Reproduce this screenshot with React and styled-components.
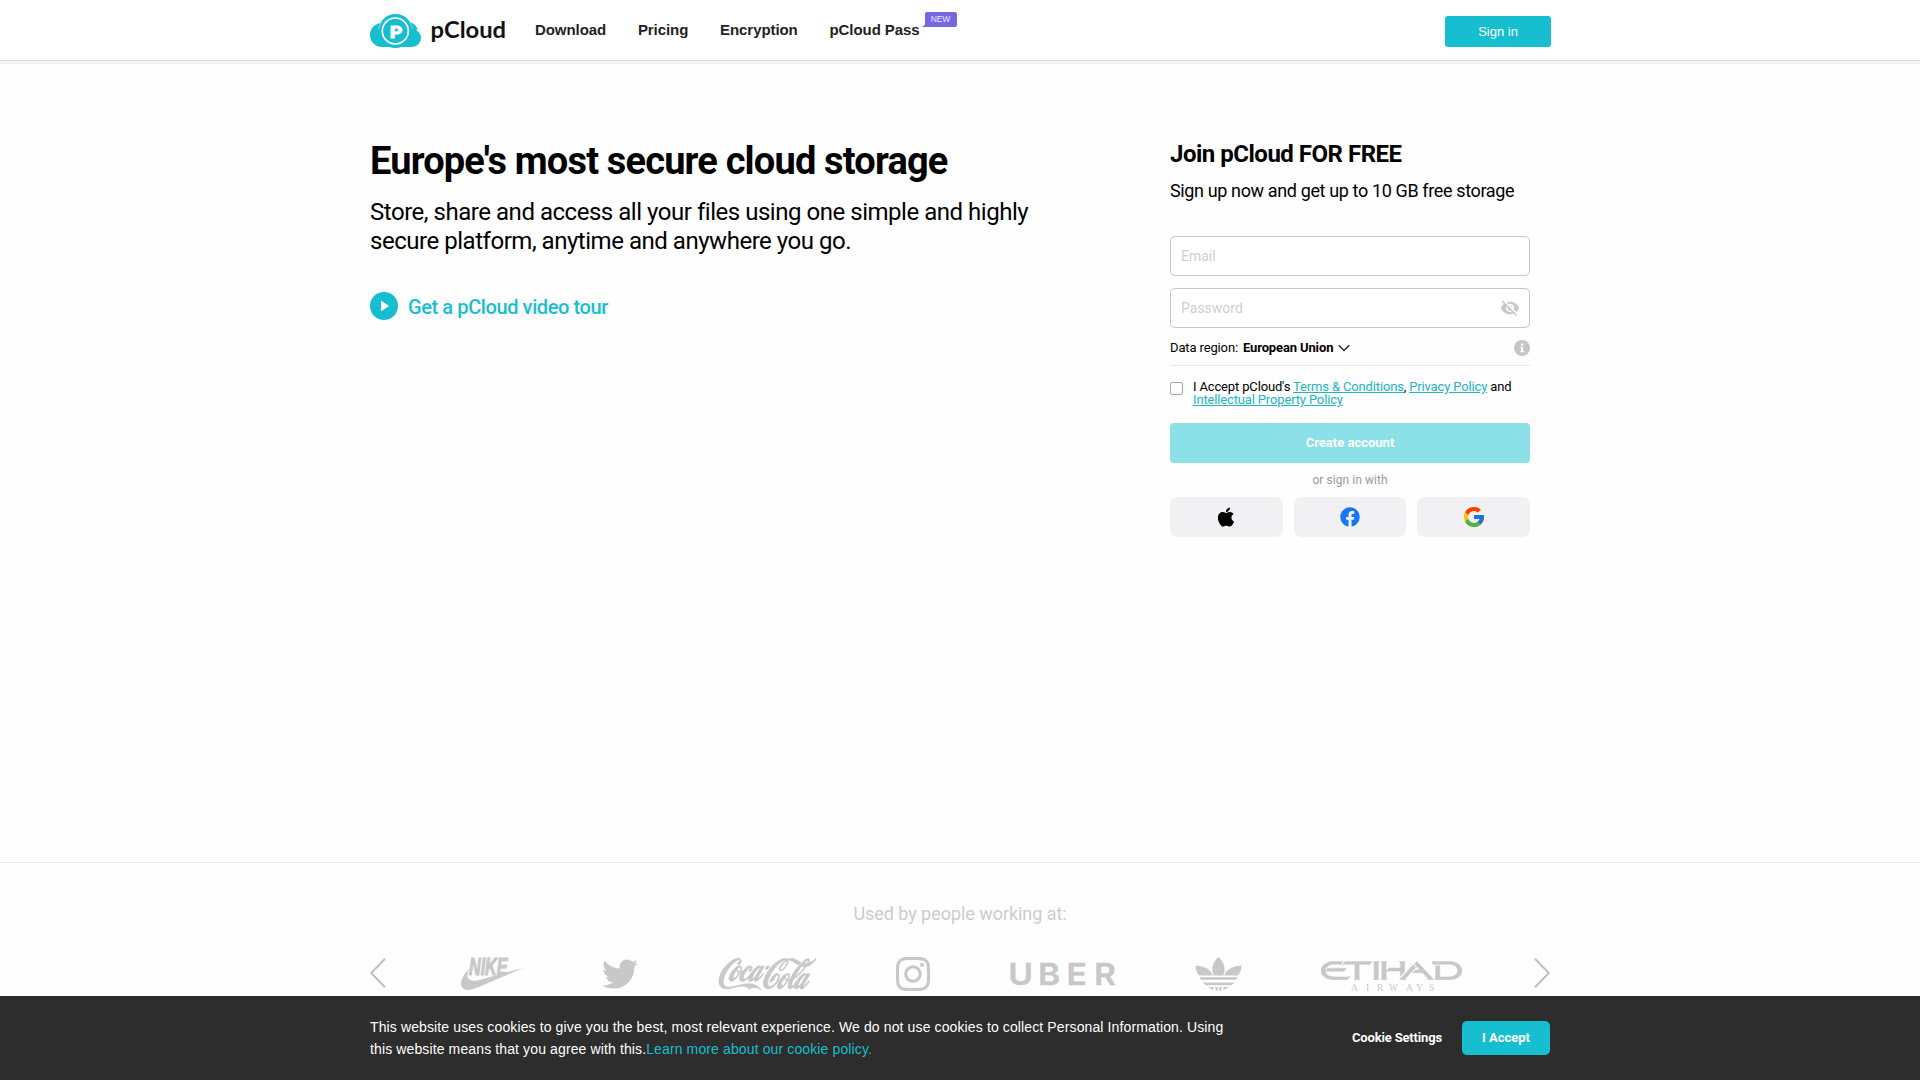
import React from "react";
import styled, { createGlobalStyle } from "styled-components";
import { FaApple, FaFacebook, FaTwitter } from "react-icons/fa";
import { FcGoogle } from "react-icons/fc";
import { MdVisibilityOff } from "react-icons/md";
import { SiCocacola, SiEtihadairways, SiInstagram, SiNike } from "react-icons/si";

const teal = "#17bed0";
const arial = `"Liberation Sans", Arial, sans-serif`;
const roboto = `Roboto, sans-serif`;

const GlobalStyle = createGlobalStyle`
  *, *::before, *::after { box-sizing: border-box; }
  body { margin: 0; background: #fefefe; color: #000; font-family: ${roboto}; }
  h1, h2, p { margin: 0; }
  a { text-decoration: none; }
  button, input { font-family: inherit; }
  svg { flex: none; overflow: visible; }
`;

const Page = styled.div`
  display: grid;
  grid-template-rows: 64px 798px 1fr;
  height: 1080px;
  overflow: hidden;
`;

const Container = styled.div`
  width: 1180px;
  margin: 0 auto;
`;

/* Header */
const Header = styled.header`
  background: #fff;
  border-bottom: 3px solid #f4f4f4;
`;
const HeaderInner = styled(Container)`
  display: flex;
  align-items: center;
  height: 60px;
`;
const HeaderRule = styled.div`
  height: 1px;
  background: #dcdcdc;
`;
const LogoLink = styled.a`
  display: flex;
  width: 136px;
  margin-right: 29px;
  padding-top: 4px;
`;
const Nav = styled.nav`
  display: flex;
  gap: 31.8px;
  margin-right: auto;
`;
const NavLink = styled.a`
  position: relative;
  font: 700 15px/20px ${arial};
  letter-spacing: -0.07px;
  color: #222;
`;
const NewBadge = styled.span`
  position: absolute;
  top: -8px;
  left: 95px;
  width: 32px;
  height: 15px;
  border-radius: 2px;
  background: #7468e0;
  color: #e9e6ff;
  font: 400 8.5px/15px ${arial};
  text-align: center;
  &::before {
    content: "";
    position: absolute;
    left: -3px;
    bottom: 0;
    border-style: solid;
    border-width: 0 0 3px 4px;
    border-color: transparent transparent #7468e0 transparent;
  }
`;
const SignInButton = styled.button`
  width: 106px;
  height: 31px;
  margin: 3px -1px 0 0;
  padding: 0;
  border: 0;
  border-radius: 3px;
  background: ${teal};
  color: #fff;
  font: 400 13px/31px ${arial};
`;

/* Hero */
const Hero = styled(Container)`
  display: flex;
  justify-content: space-between;
  align-items: flex-start;
`;
const Intro = styled.section`
  width: 700px;
  padding-top: 75px;
`;
const Title = styled.h1`
  font: 700 38px/44px ${roboto};
  letter-spacing: -0.83px;
`;
const Lead = styled.p`
  margin-top: 15px;
  font: 400 24px/29px ${roboto};
  letter-spacing: -0.47px;
`;
const TourLink = styled.a`
  display: flex;
  align-items: center;
  gap: 10px;
  height: 28px;
  margin-top: 36px;
  color: ${teal};
  font: 500 20px/28px ${roboto};
  letter-spacing: -0.4px;
`;
const TourLabel = styled.span`
  padding-top: 1px;
`;

/* Sign-up form */
const Signup = styled.form`
  width: 360px;
  margin-right: 20px;
  padding-top: 76px;
`;
const SignupTitle = styled.h2`
  font: 700 24px/28px ${roboto};
  letter-spacing: -0.49px;
`;
const SignupLead = styled.p`
  margin-top: 12px;
  font: 400 18px/22px ${roboto};
  letter-spacing: -0.37px;
`;
const Fields = styled.div`
  display: grid;
  gap: 12px;
  margin-top: 34px;
`;
const Field = styled.label`
  display: flex;
  align-items: center;
  height: 40px;
  padding: 0 9px 0 10px;
  border: 1px solid #c6c6c8;
  border-radius: 5px;
  background: #fff;
  color: #c8c8ca;
`;
const Input = styled.input`
  flex: 1;
  min-width: 0;
  padding: 0;
  border: 0;
  outline: 0;
  background: transparent;
  font-size: 14px;
  &::placeholder { color: #cfcfcf; opacity: 1; }
`;
const RegionRow = styled.div`
  display: flex;
  align-items: center;
  height: 36px;
  margin-top: 2px;
  border-bottom: 1px solid #ebebeb;
  font-size: 13px;
  letter-spacing: -0.13px;
`;
const Region = styled.strong`
  display: flex;
  align-items: center;
  gap: 5px;
  margin: 0 auto 0 5px;
`;
const Terms = styled.label`
  display: flex;
  gap: 10px;
  margin-top: 14px;
  font: 400 13px/13px ${roboto};
  letter-spacing: -0.15px;
`;
const Checkbox = styled.input`
  appearance: none;
  flex: none;
  width: 13px;
  height: 13px;
  margin: 2px 0 0;
  border: 1px solid #a6a6a6;
  border-radius: 2px;
  background: #fff;
`;
const TermsLink = styled.a`
  color: #23b3c1;
  text-decoration: underline;
`;
const CreateButton = styled.button`
  width: 100%;
  height: 40px;
  margin-top: 17px;
  padding: 0 0 2px;
  border: 0;
  border-radius: 4px;
  background: #8be1e7;
  color: #fff;
  font-size: 13px;
  font-weight: 700;
`;
const OrText = styled.p`
  margin: 10px 0;
  color: #999;
  font: 400 12px/14px ${roboto};
  letter-spacing: 0.06px;
  text-align: center;
`;
const SocialRow = styled.div`
  display: grid;
  grid-template-columns: repeat(3, 1fr);
  gap: 11px;
`;
const SocialButton = styled.button`
  display: grid;
  place-items: center;
  height: 40px;
  padding: 0;
  border: 0;
  border-radius: 7px;
  background: #f1f1f4;
  color: ${(p) => p.$color};
`;

/* Customers */
const Customers = styled.section`
  border-top: 1px solid #ebebeb;
`;
const CustomersTitle = styled.p`
  padding-top: 40px;
  color: #ccc;
  font: 400 18px/22px ${roboto};
  letter-spacing: -0.05px;
  text-align: center;
`;
const Carousel = styled(Container)`
  display: flex;
  align-items: center;
  height: 34px;
  margin-top: 32px;
  color: #c8c8ca;
`;
const ArrowButton = styled.a`
  display: flex;
  margin-bottom: 2px;
`;
const Brands = styled.div`
  display: flex;
  align-items: center;
  margin: 0 auto 0 74.5px;
`;
const Brand = styled.div`
  display: flex;
  width: ${(p) => p.$width}px;
  margin-right: ${(p) => p.$after || 0}px;
`;
const Swoosh = styled(SiNike)`
  width: 62px;
  height: 22px;
`;
const CocaCola = styled(SiCocacola)`
  width: 97px;
  height: 32px;
  stroke: currentColor;
  stroke-width: 0.2;
`;
const EtihadMark = styled(SiEtihadairways)`
  width: 141px;
  height: 19px;
  overflow: hidden;
  stroke: currentColor;
  stroke-width: 0.08;
`;

/* Cookie bar */
const CookieBar = styled.aside`
  position: fixed;
  right: 0;
  bottom: 0;
  left: 0;
  height: 84px;
  background: #2d2d2d;
`;
const CookieInner = styled(Container)`
  display: flex;
  align-items: center;
  height: 84px;
`;
const CookieText = styled.p`
  width: 870px;
  margin-right: auto;
  color: #fff;
  font: 400 14px/22px ${arial};
  letter-spacing: 0.122px;
`;
const CookieLink = styled.a`
  color: ${teal};
`;
const CookieButton = styled.button`
  width: ${(p) => p.$width}px;
  height: 34px;
  padding: 0;
  border: 0;
  border-radius: 5px;
  background: ${(p) => (p.$filled ? teal : "transparent")};
  color: #fff;
  font: 700 13px/34px ${roboto};
  letter-spacing: ${(p) => (p.$filled ? "0" : "-0.17px")};
`;
const CookieActions = styled.div`
  display: flex;
  gap: 19px;
`;

function Logo() {
  return (
    <svg width="136" height="36" viewBox="0 0 136 36">
      <g fill={teal}>
        <circle cx="12" cy="21" r="12" />
        <circle cx="25.5" cy="17" r="17" />
        <circle cx="38" cy="18" r="10" />
        <circle cx="42" cy="24" r="9" />
        <rect x="12" y="20" width="30" height="13" />
      </g>
      <path d="M11.5 8.5A17 17 0 0 0 8.3 15M39.8 8.5A17 17 0 0 1 42.6 15" fill="none" stroke="#9fe3ea" strokeWidth=".8" />
      <path d="M46.5 16.5q1.6-.2 3.6 1" fill="none" stroke="#fff" strokeWidth="1.2" />
      <circle cx="25.3" cy="17" r="13" fill="none" stroke="#fff" strokeWidth="1.7" />
      <text x="19.5" y="23.5" fill="#fff" stroke="#fff" strokeWidth="1" fontFamily="Lato, sans-serif" fontWeight="900" fontSize="17.5" textLength="12.5" lengthAdjust="spacingAndGlyphs">P</text>
      <text x="60.5" y="23.8" fill="#111" fontFamily="Lato, sans-serif" fontWeight="700" fontSize="23" textLength="75.5" lengthAdjust="spacingAndGlyphs">pCloud</text>
    </svg>
  );
}

function PlayIcon() {
  return (
    <svg width="28" height="28" viewBox="0 0 28 28">
      <circle cx="14" cy="14" r="14" fill={teal} />
      <path d="M11 8.8v10.4l8.2-5.2z" fill="#fff" />
    </svg>
  );
}

function InfoIcon() {
  return (
    <svg width="16" height="16" viewBox="0 0 16 16">
      <circle cx="8" cy="8" r="8" fill="#c6c6c6" />
      <rect x="7" y="3.5" width="2.2" height="2" fill="#fff" />
      <path d="M6.5 6.8h2.7v4.2h.8v1.2H6.3V11H7V8h-.5z" fill="#fff" />
    </svg>
  );
}

function Arrow({ back }) {
  return (
    <ArrowButton href="#">
      <svg width="16" height="30" viewBox="0 0 16 30" fill="none" stroke="#bfbfc1" strokeWidth="2">
        <path d={back ? "M15 .7 1.2 15 15 29.3" : "M1 .7 14.8 15 1 29.3"} />
      </svg>
    </ArrowButton>
  );
}

function Nike() {
  return (
    <svg width="62" height="34" viewBox="0 0 62 34" fill="currentColor">
      <text x="8" y="18" fontFamily={arial} fontWeight="700" fontStyle="italic" fontSize="24" stroke="currentColor" strokeWidth="1.2" textLength="38.5" lengthAdjust="spacingAndGlyphs">NIKE</text>
      <Swoosh x="0" y="11" viewBox="0 7.8 24 8.4" preserveAspectRatio="none" />
    </svg>
  );
}

function Uber() {
  return (
    <svg width="106" height="24" viewBox="0 0 106 24" fill="currentColor">
      <text x="-1.6 25 50.4 75" y="22.5" fontFamily="Inter, sans-serif" fontWeight="600" fontSize="30" stroke="currentColor" strokeWidth=".4" transform="scale(1.12 1)">UBER</text>
    </svg>
  );
}

function Adidas() {
  return (
    <svg width="47" height="34" viewBox="0 0 47 34" fill="currentColor">
      <path d="M23.5 0C28 4 30 9 29.6 13.2c-.2 2.4-.7 4-1.3 5.3h-9.6c-.6-1.3-1.1-2.9-1.3-5.3C17 9 19 4 23.5 0z" />
      <path d="M.6 8.5c6.2.4 11 2.2 14 5 1.7 1.7 2.7 3.4 3 5H4.2C1.5 15.5.4 12 .6 8.5zM46.4 8.5c-6.2.4-11 2.2-14 5-1.7 1.7-2.7 3.4-3 5h13.400c2.700-3 3.800-6.500 3.600-10z" />
      <path d="M4.2 20.2h38.6l-1.9 2.600H6.100zM7.500 25.400h32l-3 2.800h-26zM13 30h5.500v3.200zM20 30h2.700v4h-1.500zM24.300 30H27l-1.200 4h-1.500zM28.500 30H34l-5.500 3.200z" />
    </svg>
  );
}

function Etihad() {
  return (
    <svg width="142" height="34" viewBox="0 0 142 34" fill="currentColor">
      <EtihadMark x="0" y="4" viewBox="0 13.05 24 3.15" preserveAspectRatio="none" />
      <text x="30 45 56 68 85 95 108" y="34" fontFamily="'Liberation Serif', serif" fontSize="9.5">AIRWAYS</text>
    </svg>
  );
}

export default function App() {
  return (
    <Page>
      <GlobalStyle />
      <Header>
        <HeaderInner>
          <LogoLink href="#"><Logo /></LogoLink>
          <Nav>
            <NavLink href="#">Download</NavLink>
            <NavLink href="#">Pricing</NavLink>
            <NavLink href="#">Encryption</NavLink>
            <NavLink href="#">pCloud Pass<NewBadge>NEW</NewBadge></NavLink>
          </Nav>
          <SignInButton>Sign in</SignInButton>
        </HeaderInner>
        <HeaderRule />
      </Header>

      <Hero>
        <Intro>
          <Title>Europe's most secure cloud storage</Title>
          <Lead>
            Store, share and access all your files using one simple and highly<br />
            secure platform, anytime and anywhere you go.
          </Lead>
          <TourLink href="#"><PlayIcon /><TourLabel>Get a pCloud video tour</TourLabel></TourLink>
        </Intro>

        <Signup>
          <SignupTitle>Join pCloud FOR FREE</SignupTitle>
          <SignupLead>Sign up now and get up to 10 GB free storage</SignupLead>
          <Fields>
            <Field><Input type="email" placeholder="Email" /></Field>
            <Field><Input type="password" placeholder="Password" /><MdVisibilityOff size={20} /></Field>
          </Fields>
          <RegionRow>
            Data region:
            <Region>
              European Union
              <svg width="12" height="8" viewBox="0 0 12 8" fill="none" stroke="#222" strokeWidth="1.3">
                <path d="M.8 1.2 6 6.5l5.2-5.3" />
              </svg>
            </Region>
            <InfoIcon />
          </RegionRow>
          <Terms>
            <Checkbox type="checkbox" />
            <span>
              I Accept pCloud's <TermsLink href="#">Terms &amp; Conditions</TermsLink>, <TermsLink href="#">Privacy Policy</TermsLink> and<br />
              <TermsLink href="#">Intellectual Property Policy</TermsLink>
            </span>
          </Terms>
          <CreateButton type="button">Create account</CreateButton>
          <OrText>or sign in with</OrText>
          <SocialRow>
            <SocialButton type="button" $color="#000"><FaApple size={22} /></SocialButton>
            <SocialButton type="button" $color="#1877f2"><FaFacebook size={20} /></SocialButton>
            <SocialButton type="button"><FcGoogle size={24} /></SocialButton>
          </SocialRow>
        </Signup>
      </Hero>

      <Customers>
        <CustomersTitle>Used by people working at:</CustomersTitle>
        <Carousel>
          <Arrow back />
          <Brands>
            <Brand $width={62} $after={79}><Nike /></Brand>
            <Brand $width={36} $after={81}><FaTwitter size={36} /></Brand>
            <Brand $width={97} $after={80}>
              <CocaCola viewBox="0 8.15 24 7.7" preserveAspectRatio="none" />
            </Brand>
            <Brand $width={34} $after={80}><SiInstagram size={34} /></Brand>
            <Brand $width={106} $after={79}><Uber /></Brand>
            <Brand $width={47} $after={79}><Adidas /></Brand>
            <Brand $width={142}><Etihad /></Brand>
          </Brands>
          <Arrow />
        </Carousel>
      </Customers>

      <CookieBar>
        <CookieInner>
          <CookieText>
            This website uses cookies to give you the best, most relevant experience. We do not use cookies to collect Personal Information. Using<br />
            this website means that you agree with this.<CookieLink href="#">Learn more about our cookie policy.</CookieLink>
          </CookieText>
          <CookieActions>
            <CookieButton $width={92}>Cookie Settings</CookieButton>
            <CookieButton $width={88} $filled>I Accept</CookieButton>
          </CookieActions>
        </CookieInner>
      </CookieBar>
    </Page>
  );
}
